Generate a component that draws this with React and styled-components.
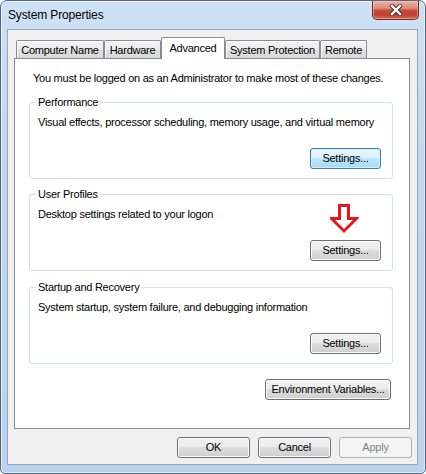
import React from 'react';
import styled, { createGlobalStyle } from 'styled-components';

const GlobalStyle = createGlobalStyle`
  html, body {
    margin: 0;
    padding: 0;
    background: #ffffff;
  }
  body {
    font-family: "Liberation Sans", Arial, sans-serif;
    font-size: 11px;
    letter-spacing: -0.25px;
    color: #000;
  }
`;

const Window = styled.div`
  box-sizing: border-box;
  width: 426px;
  height: 474px;
  display: flex;
  flex-direction: column;
  padding: 0 7px 8px 6px;
  border: 1px solid #55657a;
  border-radius: 7px 7px 5px 5px;
  background: linear-gradient(180deg, #cfe1f5 0%, #c2d8f0 30%, #bad2ec 100%);
  box-shadow: inset 0 0 0 1px rgba(255, 255, 255, 0.55);
`;

const TitleBar = styled.div`
  height: 28px;
  flex-shrink: 0;
  display: flex;
  align-items: flex-start;
  justify-content: space-between;
`;

const Title = styled.span`
  padding: 7px 0 0 1px;
  font-size: 12px;
  line-height: 15px;
  letter-spacing: -0.15px;
  color: #000;
`;

const CloseButton = styled.div`
  box-sizing: border-box;
  width: 47px;
  height: 19px;
  margin-right: -1px;
  display: flex;
  align-items: center;
  justify-content: center;
  border: 1px solid #6b2a22;
  border-top: none;
  border-radius: 0 0 5px 5px;
  background: linear-gradient(180deg, #eab0a3 0%, #dc8c7c 40%, #c64b39 52%, #c0402f 75%, #d9664c 100%);
  box-shadow: inset 0 0 0 1px rgba(255, 220, 210, 0.45);
`;

const Client = styled.div`
  flex: 1;
  display: flex;
  flex-direction: column;
  padding: 7px 0 0 0;
  border: 1px solid #97a6b9;
  background: #f0f0f0;
`;

const TabStrip = styled.div`
  display: flex;
  align-items: flex-end;
  height: 21px;
  margin-left: 6px;
  padding-left: 2px;
`;

const Tab = styled.div`
  box-sizing: border-box;
  width: ${(p) => p.$w}px;
  height: ${(p) => (p.$active ? 22 : 18)}px;
  margin-bottom: ${(p) => (p.$active ? -1 : 0)}px;
  position: relative;
  z-index: ${(p) => (p.$active ? 2 : 0)};
  display: flex;
  align-items: center;
  justify-content: center;
  padding-bottom: ${(p) => (p.$active ? 2 : 0)}px;
  border: 1px solid #898c95;
  border-bottom: none;
  border-radius: 2px 2px 0 0;
  background: ${(p) => (p.$active ? '#ffffff' : 'linear-gradient(180deg, #f3f3f3 0%, #ebebeb 50%, #e0e0e0 51%, #d9d9d9 100%)')};
  box-shadow: ${(p) => (p.$active ? 'none' : 'inset 1px 1px 0 #fbfbfb')};
  white-space: nowrap;
`;

const Panel = styled.div`
  box-sizing: border-box;
  width: 396px;
  height: 371px;
  margin-left: 6px;
  display: flex;
  flex-direction: column;
  padding: 12px 16px 0 14px;
  border: 1px solid #898c95;
  background: #ffffff;
  position: relative;
  z-index: 1;
`;

const Notice = styled.div`
  margin-left: 4px;
  line-height: 15px;
  white-space: nowrap;
`;

const Group = styled.div`
  box-sizing: border-box;
  height: 77px;
  margin-top: ${(p) => p.$gap}px;
  display: flex;
  flex-direction: column;
  border: 1px solid #d5dfe5;
  border-radius: 3px;
  position: relative;
`;

const Legend = styled.span`
  align-self: flex-start;
  margin: -8px 0 0 6px;
  padding: 0 2px;
  line-height: 15px;
  background: #ffffff;
`;

const Description = styled.div`
  margin: 5px 0 0 8px;
  line-height: 15px;
  white-space: nowrap;
`;

const Button = styled.button`
  box-sizing: border-box;
  width: ${(p) => p.$w}px;
  height: 21px;
  padding: 0 0 1px 0;
  align-self: flex-end;
  border: 1px solid #707070;
  border-radius: 3px;
  background: linear-gradient(180deg, #f2f2f2 0%, #ebebeb 49%, #dddddd 50%, #cfcfcf 100%);
  box-shadow: inset 0 0 0 1px #fcfcfc;
  font-family: "Liberation Sans", Arial, sans-serif;
  font-size: 11px;
  letter-spacing: -0.25px;
  color: #000;

  &.default {
    border-color: #3c7fb1;
    background: linear-gradient(180deg, #eaf6fd 0%, #d9f0fc 49%, #bee6fd 50%, #a7d9f5 100%);
    box-shadow: inset 0 0 0 1px #d2eefc;
  }

  &:disabled {
    border-color: #adb2b5;
    background: #f4f4f4;
    box-shadow: none;
    color: #838383;
  }
`;

const GroupButton = styled(Button)`
  margin: 18px 11px 0 0;
`;

const EnvButton = styled(Button)`
  margin: 15px 2px 0 0;
`;

const Footer = styled.div`
  display: flex;
  justify-content: flex-end;
  gap: 8px;
  margin: 8px 5px 0 0;
`;

const Arrow = styled.svg`
  position: absolute;
  left: 300px;
  top: 9px;
`;

const CloseGlyph = () => (
  <svg width="14" height="12" viewBox="0 0 14 12">
    <path d="M3 2 L11 10 M11 2 L3 10" stroke="#4a2a26" strokeWidth="4.4" strokeLinecap="round" />
    <path d="M3 2 L11 10 M11 2 L3 10" stroke="#ffffff" strokeWidth="2.4" strokeLinecap="square" />
  </svg>
);

const tabs = [
  { label: 'Computer Name', w: 88 },
  { label: 'Hardware', w: 57 },
  { label: 'Advanced', w: 64, active: true },
  { label: 'System Protection', w: 95 },
  { label: 'Remote', w: 47 },
];

const groups = [
  { title: 'Performance', text: 'Visual effects, processor scheduling, memory usage, and virtual memory', isDefault: true, gap: 16 },
  { title: 'User Profiles', text: 'Desktop settings related to your logon', arrow: true, gap: 15 },
  { title: 'Startup and Recovery', text: 'System startup, system failure, and debugging information', gap: 16 },
];

export default function App() {
  return (
    <>
      <GlobalStyle />
      <Window>
        <TitleBar>
          <Title>System Properties</Title>
          <CloseButton>
            <CloseGlyph />
          </CloseButton>
        </TitleBar>
        <Client>
          <TabStrip>
            {tabs.map((t) => (
              <Tab key={t.label} $w={t.w} $active={t.active}>
                {t.label}
              </Tab>
            ))}
          </TabStrip>
          <Panel>
            <Notice>You must be logged on as an Administrator to make most of these changes.</Notice>
            {groups.map((g) => (
              <Group key={g.title} $gap={g.gap}>
                <Legend>{g.title}</Legend>
                <Description>{g.text}</Description>
                <GroupButton $w={71} className={g.isDefault ? 'default' : undefined}>
                  Settings...
                </GroupButton>
                {g.arrow && (
                  <Arrow width="29" height="31" viewBox="0 0 29 31">
                    <polygon
                      points="9.5,1.5 18.5,1.5 18.5,14.5 26.5,14.5 14,27 1.5,14.5 9.5,14.5"
                      fill="none"
                      stroke="#e3171d"
                      strokeWidth="3"
                      strokeLinejoin="miter"
                    />
                  </Arrow>
                )}
              </Group>
            ))}
            <EnvButton $w={126}>Environment Variables...</EnvButton>
          </Panel>
          <Footer>
            <Button $w={73}>OK</Button>
            <Button $w={73}>Cancel</Button>
            <Button $w={73} disabled>
              Apply
            </Button>
          </Footer>
        </Client>
      </Window>
    </>
  );
}
